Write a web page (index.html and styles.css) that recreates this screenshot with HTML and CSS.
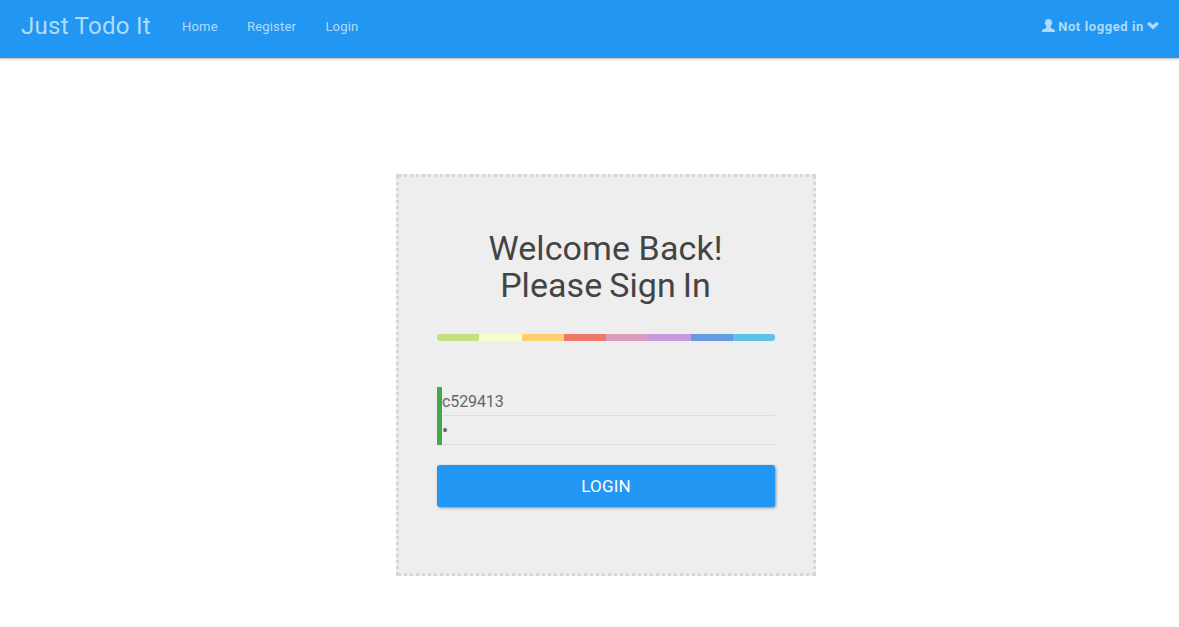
FILE: index.html
```html
<!DOCTYPE html>
<html lang="en">
<head>
<meta charset="utf-8">
<title>Just Todo It</title>
<link rel="stylesheet" href="styles.css">
</head>
<body>
<nav class="navbar">
  <a class="brand">Just Todo It</a>
  <div class="links"><a>Home</a><a>Register</a><a>Login</a></div>
  <div class="account">
    <svg class="user" viewBox="0 0 13 13"><path d="M3.100 3.2C3.100 1 4.500 0 6.500 0s3.400 1 3.400 3.200c.5.200.4 1.500-.2 1.900C9.500 6.300 9.100 7 8.600 7.600v1.200c.3.700 4.400 1.300 4.400 3V13H0v-1.200c0-1.700 4.100-2.300 4.400-3V7.600C3.900 7 3.500 6.300 3.300 5.100c-.6-.4-.7-1.700-.2-1.900z"/></svg>
    <span>Not logged in</span>
    <svg class="chevron" viewBox="0 0 12 8"><path d="M2.300.2 6 3.500 9.700.2 12 2.500 6 8 0 2.500z"/></svg>
  </div>
</nav>
<main class="page">
  <form class="signin">
    <h3 class="title">Welcome Back!<br><span class="prompt">Please Sign In</span></h3>
    <div class="rainbow"><i class="lime"></i><i class="cream"></i><i class="amber"></i><i class="coral"></i><i class="pink"></i><i class="violet"></i><i class="blue"></i><i class="cyan"></i></div>
    <input class="field" type="text" value="c529413">
    <input class="field secret" type="password" value="1">
    <button class="login" type="button">LOGIN</button>
  </form>
</main>
</body>
</html>
```
FILE: styles.css
```css
* { box-sizing: border-box; }
body {
  margin: 0;
  background: #fff;
  color: #666;
  font: 13px/1.846 Roboto, sans-serif;
  letter-spacing: .1px;
}
.navbar {
  display: flex;
  align-items: flex-start;
  height: 58px;
  padding: 0 20px 0 21px;
  background: #2196f3;
  color: #b2dbfb;
  box-shadow: 0 1px 2px rgba(0, 0, 0, .3);
}
.brand { width: 161px; padding-top: 15px; font-size: 24px; line-height: 23px; letter-spacing: .27px; }
.links { display: flex; gap: 29.3px; padding-top: 15px; line-height: 23px; letter-spacing: .18px; }
.account {
  display: flex;
  margin-left: auto;
  padding-top: 15px;
  line-height: 23px;
  font-weight: 700;
  letter-spacing: .6px;
}
.account svg { fill: currentColor; }
.user { width: 13px; height: 13px; margin: 4px 3px 0 0; }
.chevron { width: 12px; height: 9px; margin: 6px 0 0 3px; }
.page { padding: 116px 0 0 396px; }
/* The border is made of 3px squares, one every 6px along each edge. */
.signin {
  --dots: transparent 0 2px, #d7d7d7 2px 5px, transparent 5px 6px;
  width: 420px;
  height: 402px;
  padding: 56px 41px 0;
  background:
    linear-gradient(#d7d7d7, #d7d7d7) 0 0 / 3px 3px no-repeat,
    linear-gradient(#d7d7d7, #d7d7d7) 100% 0 / 3px 3px no-repeat,
    linear-gradient(#d7d7d7, #d7d7d7) 0 100% / 3px 3px no-repeat,
    linear-gradient(#d7d7d7, #d7d7d7) 100% 100% / 3px 3px no-repeat,
    repeating-linear-gradient(90deg, var(--dots)) 0 0 / 100% 3px no-repeat,
    repeating-linear-gradient(90deg, var(--dots)) 0 100% / 100% 3px no-repeat,
    repeating-linear-gradient(180deg, var(--dots)) 0 0 / 3px 100% no-repeat,
    repeating-linear-gradient(180deg, var(--dots)) 100% 0 / 3px 100% no-repeat,
    #eee;
}
.title {
  margin: 0;
  padding-right: 1px;
  color: #444;
  font-size: 34px;
  font-weight: 400;
  line-height: 37px;
  letter-spacing: .1px;
  text-align: center;
}
.prompt { letter-spacing: .05px; word-spacing: -1.5px; }
.rainbow { display: flex; height: 7px; margin: 30px 0 46px; border-radius: 3px; overflow: hidden; }
.rainbow i { flex: 1; }
.lime { background: #c4e17f; }
.cream { background: #f7fdca; }
.amber { background: #fecf71; }
.coral { background: #f0776c; }
.pink { background: #db9dbe; }
.violet { background: #c49cde; }
.blue { background: #669ae1; }
.cyan { background: #62c2e4; }
.field {
  display: block;
  width: 100%;
  height: 29px;
  padding: 0;
  border: 0;
  border-left: 5px solid #42a948;
  background: linear-gradient(#ddd, #ddd) bottom / 100% 1px no-repeat;
  color: #666;
  font: 16px Roboto, sans-serif;
  letter-spacing: -.1px;
  outline: none;
}
.secret { font-size: 18px; }
.login {
  display: block;
  width: 100%;
  height: 42px;
  margin-top: 20px;
  padding: 0;
  border: 0;
  border-radius: 3px;
  background: #2196f3;
  color: #fff;
  font: 17px Roboto, sans-serif;
  letter-spacing: .2px;
  box-shadow: 1px 1px 3px rgba(0, 0, 0, .4);
}
```
